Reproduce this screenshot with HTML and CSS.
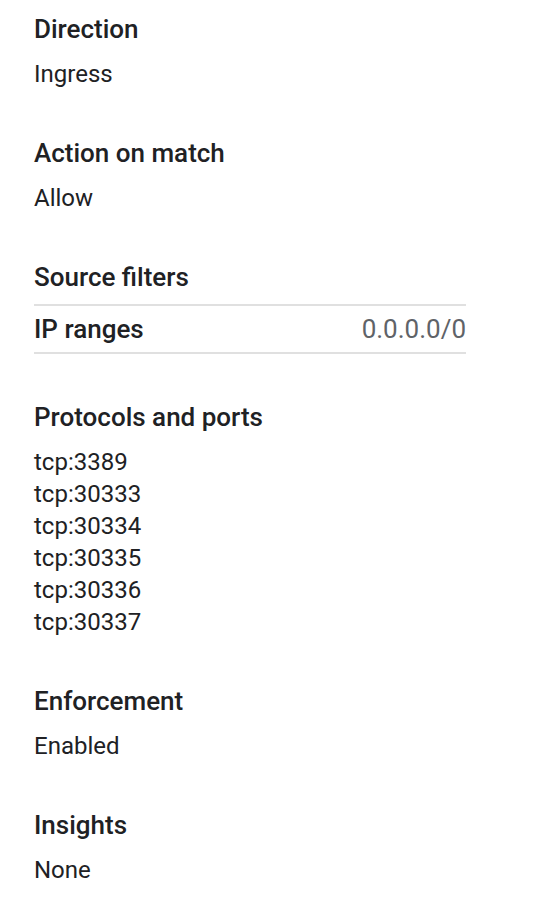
FILE: index.html
```html
<!DOCTYPE html>
<html>
<head>
<meta charset="utf-8">
<link rel="stylesheet" href="styles.css">
</head>
<body>
<div class="details">
  <section class="field">
    <h3 class="label">Direction</h3>
    <div class="value">Ingress</div>
  </section>
  <section class="field">
    <h3 class="label">Action on match</h3>
    <div class="value">Allow</div>
  </section>
  <section class="field field-table">
    <h3 class="label">Source filters</h3>
    <table class="kv">
      <tr><th>IP ranges</th><td>0.0.0.0/0</td></tr>
    </table>
  </section>
  <section class="field">
    <h3 class="label">Protocols and ports</h3>
    <div class="value">
      <div>tcp:3389</div>
      <div>tcp:30333</div>
      <div>tcp:30334</div>
      <div>tcp:30335</div>
      <div>tcp:30336</div>
      <div>tcp:30337</div>
    </div>
  </section>
  <section class="field">
    <h3 class="label">Enforcement</h3>
    <div class="value">Enabled</div>
  </section>
  <section class="field">
    <h3 class="label">Insights</h3>
    <div class="value">None</div>
  </section>
</div>
</body>
</html>
```
FILE: styles.css
```css
html, body {
  margin: 0;
  padding: 0;
  background: #ffffff;
}
body {
  font-family: Roboto, "Liberation Sans", sans-serif;
  color: #202124;
  font-size: 24px;
  line-height: 32px;
}
.details {
  padding: 13px 34px 0 34px;
  width: 432px;
  display: flex;
  flex-direction: column;
  gap: 47px;
}
.field {
  display: flex;
  flex-direction: column;
  gap: 13px;
}
.field-table {
  gap: 11px;
}
.label {
  margin: 0;
  font-size: 26px;
  line-height: 32px;
  font-weight: 500;
}
.value {
  font-weight: 400;
}
.kv {
  width: 100%;
  border-collapse: collapse;
  border-top: 2px solid #e0e0e0;
  border-bottom: 2px solid #e0e0e0;
  font-size: 26px;
}
.kv th {
  text-align: left;
  font-weight: 500;
  padding: 7px 0;
}
.kv td {
  text-align: right;
  color: #5f6368;
  padding: 7px 0;
}
```
